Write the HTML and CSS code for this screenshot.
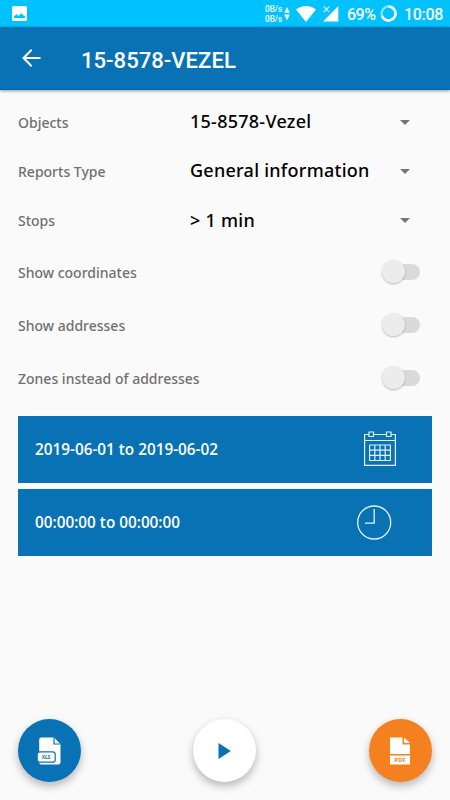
FILE: index.html
```html
<!DOCTYPE html>
<html lang="en">
<head>
<meta charset="utf-8">
<title>15-8578-VEZEL</title>
<link rel="stylesheet" href="styles.css">
</head>
<body>
<div class="status">
  <svg class="photo" width="15" height="15" viewBox="0 0 15 15"><rect width="15" height="15" rx="1.5" fill="#fff"/><path d="M2 12V10.5L4.5 8.3 6.5 10 9.3 7.2 11 9 13 10.5V12z" fill="#00c2ff"/></svg>
  <div class="rates"><span>0B/s</span><span>0B/s</span></div>
  <svg class="updown" width="6" height="14" viewBox="0 0 6 14"><path d="M3 0 5.8 5.7H.2zM3 13.3.2 7.5h5.6z" fill="#fff"/></svg>
  <svg class="wifi" width="20" height="16" viewBox="0 0 20 16"><path d="M0 3.6C5.5-1.1 14.5-1.1 20 3.6L10 16z" fill="#fff"/></svg>
  <svg class="signal" width="16" height="16" viewBox="0 0 16 16"><path d="M15.3 0V15.5H0z" fill="#fff"/><path d="M0 0H7.5V7.5H0z" fill="#00c2ff"/><path d="M.7.7 6.2 6.2M6.2.7.7 6.2" stroke="#fff" stroke-width="1.1"/></svg>
  <span class="percent">69%</span>
  <svg class="battery" width="17" height="17" viewBox="0 0 17 17" fill="none" stroke-width="2.5"><circle cx="8.5" cy="8.5" r="7" stroke="#80e0ff"/><path d="M8.5 1.5A7 7 0 1 1 1.9 10.8" stroke="#fff"/></svg>
  <span class="time">10:08</span>
</div>
<header class="bar">
  <svg width="19" height="18" viewBox="0 0 19 18" fill="none" stroke="#fff" stroke-width="2"><path d="M18.5 9H2M9.7 .8 1.5 9 9.7 17.2"/></svg>
  <h1>15-8578-VEZEL</h1>
</header>
<main>
  <div class="row"><span class="label">Objects</span><span class="value">15-8578-Vezel</span><i class="caret"></i></div>
  <div class="row"><span class="label">Reports Type</span><span class="value">General information</span><i class="caret"></i></div>
  <div class="row"><span class="label">Stops</span><span class="value">&gt; 1 min</span><i class="caret"></i></div>
  <div class="options">
    <div class="option"><span class="label">Show coordinates</span><span class="switch"></span></div>
    <div class="option"><span class="label">Show addresses</span><span class="switch"></span></div>
    <div class="option"><span class="label">Zones instead of addresses</span><span class="switch"></span></div>
  </div>
  <div class="range date"><span>2019-06-01 to 2019-06-02</span>
    <svg width="32" height="35" viewBox="0 0 32 35" fill="none" stroke="#e4f0f9" stroke-width="1.2"><path d="M5 3.5H.6V34.4H31.4V3.5H27M9.5 3.5H22.5M.6 9.5H31.4"/><path d="M5 1h4.5v4.5H5zM22.5 1H27v4.5h-4.5z"/><path d="M5.6 14H26.4V29.5H5.6zM10.8 14V29.5M16 14V29.5M21.2 14V29.5M5.6 19.2H26.4M5.6 24.4H26.4"/></svg>
  </div>
  <div class="range clock"><span>00:00:00 to 00:00:00</span>
    <svg width="35" height="35" viewBox="0 0 35 35" fill="none" stroke="#e4f0f9" stroke-width="1.3"><circle cx="17.2" cy="17.5" r="16.5"/><path d="M17.2 4V18.2H8"/></svg>
  </div>
</main>
<footer>
  <div class="fab xls">
    <svg width="24" height="28" viewBox="0 0 24 28"><path d="M4.2.5H17L23.5 7V25.5Q23.5 27.5 21.5 27.5H4.2Q2.2 27.5 2.2 25.5V2.5Q2.2.5 4.2.5z" fill="#fff"/><path d="M17 .5V7H23.5" fill="none" stroke="#0872b4" stroke-width="1.2"/><rect x=".2" y="14.8" width="18" height="10.4" rx="2.5" fill="#fff" stroke="#0872b4" stroke-width="1.2"/><text x="9" y="21.9" text-anchor="middle" textLength="8.5">XLS</text></svg>
  </div>
  <div class="fab play"><svg width="13" height="16" viewBox="0 0 13 16"><path d="M.5 0 12.8 8 .5 16z" fill="#0872b4"/></svg></div>
  <div class="fab pdf">
    <svg width="20" height="28" viewBox="0 0 20 28"><path d="M0 .5H12.5V7.5H20V17H0zM14.2.5 20 6H14.2zM0 18.6H20V27.5H0z" fill="#fff"/><text x="10" y="25.1" text-anchor="middle" textLength="11.5">PDF</text></svg>
  </div>
</footer>
</body>
</html>
```
FILE: styles.css
```css
* { box-sizing: border-box; }
body {
  margin: 0;
  width: 450px;
  height: 800px;
  overflow: hidden;
  display: flex;
  flex-direction: column;
  background: #fafafa;
  font-family: "Noto Sans", "Open Sans", sans-serif;
  font-weight: 500;
}
svg { display: block; flex: none; }
span { white-space: nowrap; }
.status {
  height: 27px;
  flex: none;
  display: flex;
  align-items: center;
  padding-left: 12px;
  background: #00c2ff;
  color: #fff;
  font: 500 16px/27px Roboto, sans-serif;
}
.photo { margin-right: 238px; }
.rates {
  display: flex;
  flex-direction: column;
  width: 17px;
  margin-right: 2px;
  font: 500 8.2px/10px Roboto, sans-serif;
}
.updown { margin-right: 6px; }
.wifi { margin-right: 7px; }
.signal { margin-right: 8px; }
.percent { width: 33px; letter-spacing: -.5px; padding-top: 1px; }
.battery { margin-right: 7px; }
.time { padding-top: 1px; letter-spacing: -.3px; }
.bar {
  height: 63px;
  flex: none;
  display: flex;
  align-items: center;
  padding-left: 22px;
  background: #0872b4;
  border-bottom: 1px solid #0566a9;
  box-shadow: 0 1px 3px rgba(0, 0, 0, .4);
}
h1 {
  margin: 3px 0 0 40px;
  color: #fff;
  font: 500 22.1px/28px Roboto, sans-serif;
}
main {
  flex: 1;
  padding: 7px 18px 0;
}
.row { display: flex; align-items: center; height: 49.3px; }
.label { width: 172px; color: #707070; font-size: 14px; line-height: 20px; padding-top: 2px; }
.value {
  width: 210px;
  padding-bottom: 1px;
  color: #000;
  font-size: 18px;
  line-height: 24px;
  letter-spacing: .26px;
}
.caret {
  border: 5.5px solid transparent;
  border-top-color: #757575;
  border-bottom: 0;
  margin-top: 1px;
}
.options { padding-top: 1px; }
.option {
  display: flex;
  align-items: center;
  justify-content: space-between;
  height: 53px;
  padding-right: 12px;
}
.switch {
  position: relative;
  width: 36px;
  height: 16px;
  border-radius: 8px;
  background: #dadada;
}
.switch::before {
  content: "";
  position: absolute;
  left: -2px;
  top: -4px;
  width: 23px;
  height: 23px;
  border-radius: 50%;
  background: #ececec;
  box-shadow: 0 1px 2px rgba(0, 0, 0, .25);
}
.range {
  display: flex;
  align-items: center;
  justify-content: space-between;
  height: 67px;
  padding-left: 17px;
  background: #0872b4;
  color: #fff;
  font: 600 15.3px/22px "Open Sans", sans-serif;
}
.date { margin: 11px 0 6px; padding-right: 36px; }
.date svg { margin-bottom: 1px; }
.clock { padding-right: 40px; }
footer {
  flex: none;
  display: flex;
  justify-content: space-between;
  height: 81px;
  padding: 0 18px;
}
.fab {
  display: flex;
  align-items: center;
  justify-content: center;
  width: 63px;
  height: 63px;
  border-radius: 50%;
  box-shadow: 0 4px 8px rgba(0, 0, 0, .28);
}
.fab svg { margin-right: 1px; }
.xls { background: #0872b4; }
.play { background: #fff; margin-right: 1px; }
.pdf { background: #f58020; }
.fab text { font: 700 5px "Open Sans", sans-serif; fill: #0872b4; }
.pdf text { font-size: 6px; fill: #f58020; }
```
